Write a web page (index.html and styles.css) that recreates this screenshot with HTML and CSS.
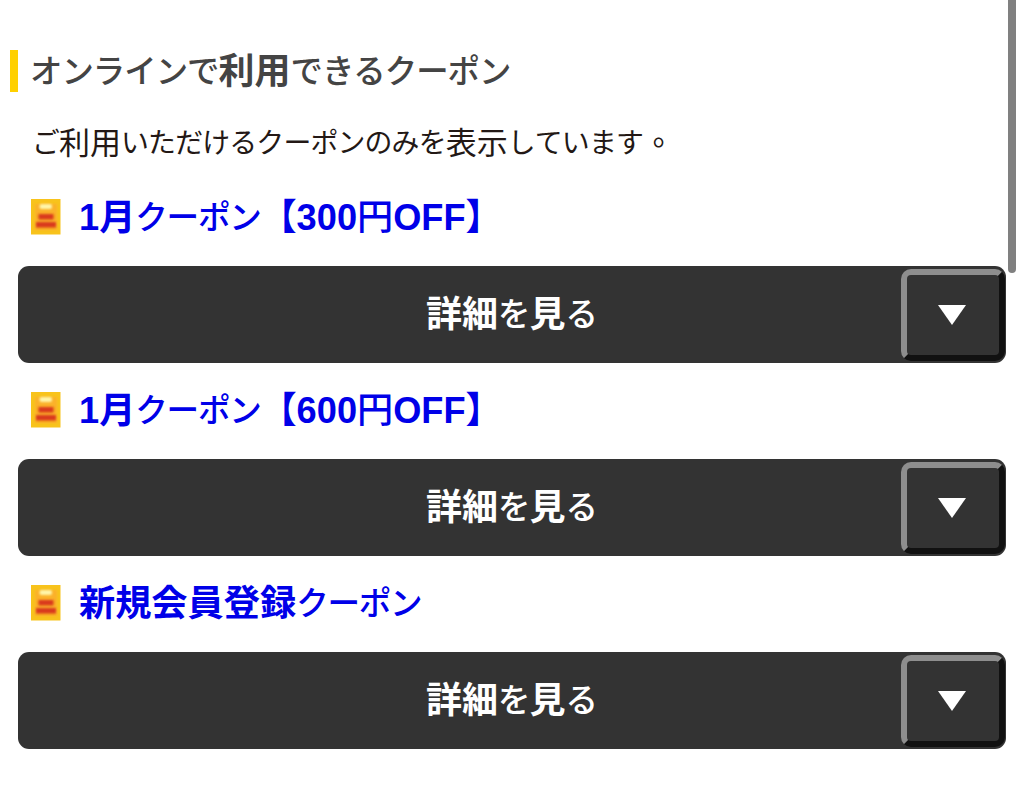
FILE: index.html
```
<!DOCTYPE html>
<html lang="ja">
<head>
  <meta charset="UTF-8" />
  <meta name="viewport" content="width=device-width, initial-scale=1.0"/>
  <title>オンラインで利用できるクーポン</title>
  <link rel="stylesheet" href="styles.css">
</head>
<body>
  <h1 class="page-title"><span class="kana">オンラインで</span>利用<span class="kana">できるクーポン</span></h1>
  <p class="lead"><span class="kana">ご</span>利用<span class="kana">いただけるクーポンのみを</span>表示<span class="kana">しています</span><span class="stop" lang="zh-Hant">。</span></p>

  <section class="coupon">
    <h2 class="coupon-title">
      <svg class="coupon-icon" viewBox="0 0 30 36"><use href="#ticket"/></svg>
      <a>1月<span class="kana">クーポン</span>【300<span class="yen">円</span>OFF】</a>
    </h2>
    <div class="detail-bar">
      <span class="detail-label">詳細<span class="kana">を</span>見<span class="kana">る</span></span>
      <button type="button" class="toggle-btn"><svg class="arrow" viewBox="0 0 28 20"><path d="M0 0h28L14 20z"/></svg></button>
    </div>
  </section>

  <section class="coupon">
    <h2 class="coupon-title">
      <svg class="coupon-icon" viewBox="0 0 30 36"><use href="#ticket"/></svg>
      <a>1月<span class="kana">クーポン</span>【600<span class="yen">円</span>OFF】</a>
    </h2>
    <div class="detail-bar">
      <span class="detail-label">詳細<span class="kana">を</span>見<span class="kana">る</span></span>
      <button type="button" class="toggle-btn"><svg class="arrow" viewBox="0 0 28 20"><path d="M0 0h28L14 20z"/></svg></button>
    </div>
  </section>

  <section class="coupon">
    <h2 class="coupon-title">
      <svg class="coupon-icon" viewBox="0 0 30 36"><use href="#ticket"/></svg>
      <a>新規会員登録<span class="kana">クーポン</span></a>
    </h2>
    <div class="detail-bar">
      <span class="detail-label">詳細<span class="kana">を</span>見<span class="kana">る</span></span>
      <button type="button" class="toggle-btn"><svg class="arrow" viewBox="0 0 28 20"><path d="M0 0h28L14 20z"/></svg></button>
    </div>
  </section>

  <div class="scroll-thumb"></div>

  <!-- coupon ticket icon -->
  <svg class="defs" width="0" height="0">
    <defs>
      <filter id="soft" filterUnits="userSpaceOnUse" x="0" y="0" width="30" height="36"><feGaussianBlur stdDeviation="1.3"/></filter>
      <symbol id="ticket" viewBox="0 0 30 36">
        <rect width="29.5" height="35.5" fill="#f8c31c"/>
        <rect x="4" y="5" width="22" height="26" fill="#fbb12c" filter="url(#soft)"/>
        <rect x="8.5" y="5" width="12.5" height="5" rx="2" fill="#fff5a8" filter="url(#soft)"/>
        <g fill="#d93a1c" filter="url(#soft)">
          <rect x="7.5" y="15" width="15" height="5.5"/>
          <rect x="5" y="23" width="20" height="5.5"/>
        </g>
      </symbol>
    </defs>
  </svg>
</body>
</html>
```
FILE: styles.css
```
* {
  box-sizing: border-box;
}

body {
  margin: 0;
  padding: 50px 18px 0;
  height: 805px;
  overflow: hidden;
  background-color: #fff;
  font-family: "Liberation Sans", "Noto Sans CJK JP", sans-serif;
  font-kerning: none;
}

.kana {
  font-size: 0.9em;
  font-weight: 500;
  letter-spacing: -0.03em;
  vertical-align: 1px;
  line-height: 1;
}

.page-title {
  margin: 0 0 0 -8px;
  padding-left: 12px;
  height: 42px;
  line-height: 44px;
  border-left: 8px solid #ffd000;
  color: #444;
  font-size: 36px;
  white-space: nowrap;
}

.lead {
  margin: 29px 0 0 14px;
  height: 40px;
  line-height: 40px;
  color: #231815;
  font-size: 31px;
  white-space: nowrap;
}

.lead .kana {
  font-weight: 400;
}

.stop {
  font-family: "Noto Sans CJK TC", sans-serif;
}

.coupon {
  height: 193px;
}

.coupon:first-of-type {
  margin-top: 31px;
}

.coupon-title {
  display: flex;
  align-items: center;
  gap: 18px;
  margin: 0 0 24px;
  padding-left: 13px;
  height: 50px;
  line-height: 54px;
  color: #0000e8;
  font-size: 36.2px;
  white-space: nowrap;
}

.coupon-title a {
  padding-top: 2px;
}

.coupon-title .kana {
  letter-spacing: -0.04em;
}

.yen {
  font-weight: 500;
}

.coupon-icon {
  width: 30px;
  height: 36px;
}

.detail-bar {
  display: flex;
  align-items: center;
  height: 97px;
  width: 988px;
  padding-right: 1px;
  border-radius: 11px;
  background-color: #333;
  color: #fff;
}

.detail-label {
  flex: 1;
  padding: 0 0 7px 104px;
  text-align: center;
  font-size: 36px;
  font-weight: bold;
}

.toggle-btn {
  display: flex;
  align-items: center;
  justify-content: center;
  width: 104px;
  height: 92px;
  padding: 0 2px 0 0;
  border: 6px solid;
  border-color: #8e8e8e #111 #111 #8e8e8e;
  border-radius: 10px;
  background-color: #333;
}

.arrow {
  width: 28px;
  height: 20px;
  fill: #fff;
}

.scroll-thumb {
  position: fixed;
  top: -8px;
  left: 1008px;
  width: 8px;
  height: 281px;
  border-radius: 4px;
  background-color: #808080;
}

.defs {
  position: absolute;
}
```
